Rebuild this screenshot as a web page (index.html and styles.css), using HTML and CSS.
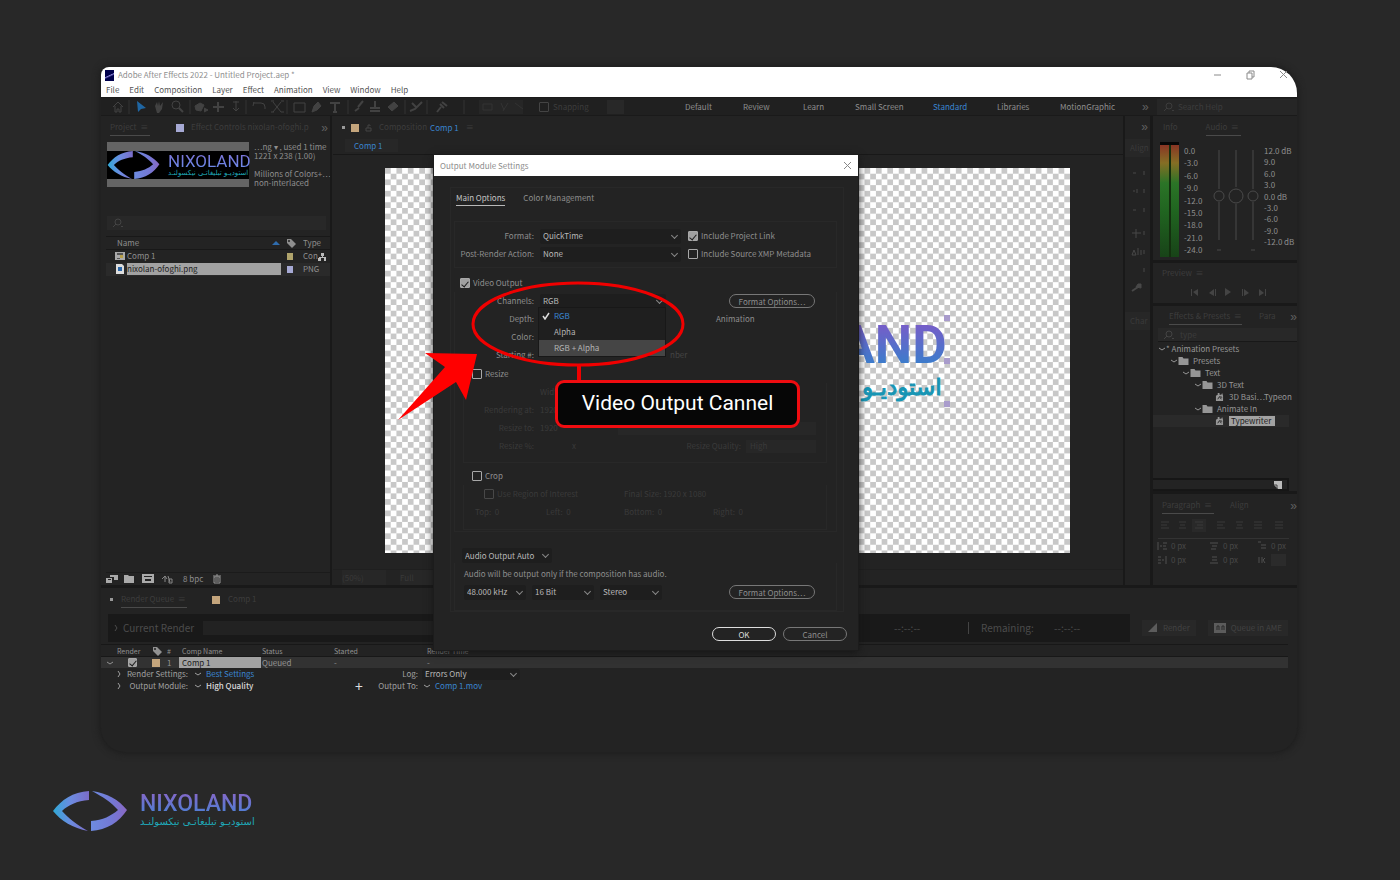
FILE: index.html
```html
<!DOCTYPE html>
<html lang="en">
<head>
<meta charset="utf-8">
<title>Output Module Settings</title>
<link rel="stylesheet" href="styles.css">
</head>
<body>
<svg class="defs" aria-hidden="true">
  <defs>
    <linearGradient id="eyeA" x1="0" y1="0" x2="1" y2="0"><stop offset="0" stop-color="#2fa9d6"/><stop offset="0.5" stop-color="#6d8be0"/><stop offset="1" stop-color="#7b6cc8"/></linearGradient>
    <linearGradient id="eyeB" x1="0" y1="0" x2="1" y2="0"><stop offset="0" stop-color="#6d8be0"/><stop offset="0.6" stop-color="#7478d4"/><stop offset="1" stop-color="#8a68c4"/></linearGradient>
    <symbol id="eye" viewBox="0 0 74 40">
      <path fill="url(#eyeA)" d="M36 0v9C24 10 15 14 9 20c6 7 14 13 26 20C20 37 8 30 0 20 8 9 20 1 36 0z"/>
      <path fill="url(#eyeB)" d="M38 40v-10c12-1 20-5 27-11C58 11 50 6 39 0c15 2 27 9 35 19-8 12-20 20-36 21z"/>
    </symbol>
    <symbol id="folder" viewBox="0 0 10 8"><path fill="currentColor" d="M0 0h4l1 1.500h5V8H0z"/></symbol>
    <symbol id="preset" viewBox="0 0 10 9"><path fill="currentColor" d="M1 9V3l2-1V0h2v2h2l1-2 1 3v6H1z"/><path stroke="#232323" fill="none" d="M3 7l2-3 2 3M6 4l2 1"/></symbol>
    <symbol id="tag" viewBox="0 0 10 10"><path fill="currentColor" d="M1 1h4l5 5-4 4-5-5z"/><circle cx="3" cy="3" r="1" fill="#232323"/></symbol>
    <symbol id="chev" viewBox="0 0 8 8"><path fill="none" stroke="currentColor" d="M1 3l3 2 3-2"/></symbol>
    <symbol id="chevr" viewBox="0 0 8 8"><path fill="none" stroke="currentColor" d="M3 1l2 3-2 3"/></symbol>
    <symbol id="lens" viewBox="0 0 12 10"><path fill="none" stroke="currentColor" d="M5 6L2 9M10 8l1 1 1-1"/><circle cx="7" cy="4" r="3" fill="none" stroke="currentColor"/></symbol>
  </defs>
</svg>

<main class="app">
  <header class="titlebar">
    <div class="titlerow">
      <span class="appicon"></span>
      <span class="apptitle">Adobe After Effects 2022 - Untitled Project.aep *</span>
      <svg class="winctl" viewBox="0 0 80 12"><path fill="none" stroke="#8a8a8a" d="M4 6h7M37 4h5v6h-5zM39 4V2h5v6h-2M70 2l7 7M77 2l-7 7"/></svg>
    </div>
    <nav class="menubar"><span>File</span><span>Edit</span><span>Composition</span><span>Layer</span><span>Effect</span><span>Animation</span><span>View</span><span>Window</span><span>Help</span></nav>
  </header>

  <div class="toolbar">
    <svg class="tools" viewBox="0 0 364 18" fill="none" stroke="#424242">
      <path d="M12 9l5-5 5 5M14 8v6h2v-3h2v3h2V8"/><path stroke="#333" d="M28 2v14M89 2v14M145 2v14M186 2v14M247 2v14M304 2v14M326 2v14M363 2v14"/>
      <path fill="#1f66a3" stroke="none" d="M36 3l9 7-5 1-3 3z"/>
      <path fill="#424242" stroke="none" d="M54 8l2-4 1 4 1-5 1 5 3-4-1 7-3 4h-2z"/>
      <circle cx="75" cy="7" r="4"/><path stroke-width="2" d="M78 10l4 4"/>
      <path fill="#424242" d="M94 8l5-3 4 2-3 6-5-1zM103 10l4 2-4 2"/>
      <path stroke-width="2" d="M112 9h11M117 4v10"/><path d="M135 3v10M132 10l3 3 3-3M132 4h6"/>
      <path d="M152 8l1-4M152 5h8a4 4 0 0 1 4 4v2M172 4l8 10M180 4l-8 10M170 3h3M180 3h3M170 14h3M180 14h3"/>
      <path d="M193 5h11v9h-11z"/>
      <path fill="#424242" d="M211 14l2-6 4-4 3 4-4 4z"/>
      <path stroke-width="2" d="M229 5h10M234 5v9M232 14h4"/>
      <path stroke-width="2" d="M262 3l-5 6M254 13l4-3M274 3v6M269 10h10M269 13h10"/>
      <path fill="#424242" d="M287 9l6-5 4 4-6 5z"/>
      <path stroke-width="2" d="M311 5l4 4M309 13l5-2 7-7M339 6l4 4M336 14l4-5M341 4l5 4"/>
    </svg>
    <svg class="tools2" viewBox="0 0 44 14" fill="none" stroke="#333"><path d="M4 4h9v6H4zM22 3l3 7M29 3l-5 8M36 3l8 6"/></svg>
    <label class="snap"><input type="checkbox" class="box"> Snapping</label>
    <span class="toolpad"></span>
    <nav class="spaces"><button>Default</button><button>Review</button><button>Learn</button><button>Small Screen</button><button class="blue">Standard</button><button>Libraries</button><button>MotionGraphic</button><button class="guil">»</button></nav>
    <label class="helpsearch"><svg class="ic12"><use href="#lens"/></svg><input type="text" placeholder="Search Help" aria-label="Search Help"></label>
  </div>

  <div class="workarea">
    <section class="project">
      <div class="tabs"><span class="tab on">Project &nbsp;≡</span><i class="sw lav"></i><span class="tab">Effect Controls nixolan-ofoghi.p</span><span class="more">»</span></div>
      <div class="asset">
        <div class="thumb"><div class="thumbin"><svg class="eyes"><use href="#eye"/></svg><div class="brand small"><b>NIXOLAND</b><span lang="fa" dir="rtl">استودیـو تبلیغاتـی نیکسولنـد</span></div></div></div>
        <p class="info">…ng ▾ , used 1 time<br>1221 x 238 (1.00)<br><br>Millions of Colors+…<br>non-interlaced</p>
      </div>
      <label class="search left"><svg class="ic12"><use href="#lens"/></svg><input type="text" aria-label="Search project"></label>
      <table class="files">
        <thead><tr><th>Name</th><th class="c-sort"><i class="tri"></i></th><th><svg class="ic10"><use href="#tag"/></svg></th><th>Type</th></tr></thead>
        <tbody>
          <tr><td colspan="2"><span class="fname"><svg class="ic10" viewBox="0 0 10 8"><path fill="#aaa" d="M0 0h10v8H0z"/><path fill="#555" d="M2 1h6v2H2zM2 6h3v1H2z"/><path fill="#b7a04a" d="M5 3h3v3H5z"/></svg><span>Comp 1</span></span></td><td><i class="sw khaki"></i></td><td>Con<svg class="ic8" viewBox="0 0 9 8"><path fill="#bbb" d="M3 0h3v3H5v1h3v4H6V5H3v3H0V5h1V4h3V3H3z"/></svg></td></tr>
          <tr class="picked"><td colspan="2"><span class="fname"><svg class="ic10" viewBox="0 0 10 10"><path fill="#ddd" d="M1 0h6l2 2v8H1z"/><path fill="#2a66a8" d="M3 3h4v4H3z"/></svg><span class="hl">nixolan-ofoghi.png</span></span></td><td><i class="sw lav"></i></td><td>PNG</td></tr>
        </tbody>
      </table>
      <div class="pfoot">
        <svg class="footicons" viewBox="0 0 68 10" fill="#aaa"><path d="M0 4h6v5H0zM4 1h8v5H8V3H4zM18 1h4l1 1h5v7H18zM36 0h12v9H36z"/><path fill="#232323" d="M38 2h8v1h-8zM39 5h6v2h-6zM2 5h3v1H2z"/><path fill="none" stroke="#888" d="M56 5l3-3 2 3M59 2v6M62 2l2 6M63 5h3v4h-3z"/></svg>
        <span>8 bpc</span>
        <svg class="ic10" viewBox="0 0 10 10"><path fill="none" stroke="#999" d="M2 3h6v6H2zM1 2h8M4 1h2M4 4v4M6 4v4"/></svg>
      </div>
    </section>

    <section class="comp">
      <div class="tabs"><i class="dot"></i><i class="sw tan"></i><svg class="ic8" viewBox="0 0 8 8"><path fill="none" stroke="#444" d="M1 4h5v3H1zM3 4V1h2v1"/></svg><span class="tab">Composition</span><b class="blue">Comp 1</b><span class="tab">≡</span></div>
      <div class="crumb"><button class="blue">Comp 1</button></div>
      <div class="stage">
        <div class="canvas">
          <svg class="checker" viewBox="0 0 960 540"><defs><pattern id="ck" width="16" height="16" patternUnits="userSpaceOnUse"><path fill="#fff" d="M0 0h16v16H0z"/><path fill="#c8c8c8" d="M0 0h8v8H0zM8 8h8v8H8z"/></pattern></defs><rect width="960" height="540" fill="url(#ck)"/></svg>
          <div class="brand big"><b>AND</b><span lang="fa" dir="rtl">استودیـو تـ</span></div>
          <div class="handles"><i></i><i></i><i></i></div>
        </div>
      </div>
      <div class="viewfoot"><span>(50%)</span><span>Full</span></div>
    </section>

    <aside class="strip">
      <span class="more">»</span><span class="chip">Align</span>
      <svg viewBox="0 0 24 150" fill="none" stroke="#484848"><path d="M8 11h3M19 9v4M8 29h2M12 27v4M19 27v4M8 48h3M19 46v4M7 71h9M11 67v9M19 69v4M7 93l2-5 2 5zM13 86v7M16 88v5M19 88v4M19 106v4"/><path stroke-width="2" d="M7 129l6-4"/><path fill="#484848" d="M11 125l2-3h3v4z"/></svg>
      <span class="chip">Char</span>
    </aside>

    <aside class="right">
      <section class="audio">
        <div class="tabs"><span class="tab">Info</span><span class="tab on wide">Audio &nbsp;≡</span></div>
        <div class="mixer">
          <div class="meter"></div>
          <div class="scale"><span>0.0</span><span>-3.0</span><span>-6.0</span><span>-9.0</span><span>-12.0</span><span>-15.0</span><span>-18.0</span><span>-21.0</span><span>-24.0</span></div>
          <svg class="faders" viewBox="0 0 52 114" fill="none" stroke="#4a4a4a"><path d="M9 8v39M9 60v38M26 8v37M26 62v36M43 8v39M43 60v38M7 108h4M41 108h4"/><circle cx="9" cy="54" r="5"/><circle cx="26" cy="54" r="7"/><circle cx="43" cy="54" r="5"/></svg>
          <div class="scale db"><span>12.0 dB</span><span>9.0</span><span>6.0</span><span>3.0</span><span>0.0 dB</span><span>-3.0</span><span>-6.0</span><span>-9.0</span><span>-12.0 dB</span></div>
        </div>
      </section>
      <section class="preview">
        <div class="ptitle">Preview &nbsp;≡</div>
        <svg class="play" viewBox="0 0 76 8" fill="#444"><path d="M1 1h1v7H1zM8 1v7L3 4zM24 1v7l-5-3zM25 1h1v7h-1zM35 0l6 4-6 4zM52 1h1v7h-1zM54 1v7l5-3zM69 1v7l5-3zM75 1h1v7h-1z"/></svg>
      </section>
      <section class="effects">
        <div class="tabs"><span class="tab on">Effects &amp; Presets &nbsp;≡</span><span class="tab">Para</span><span class="more">»</span></div>
        <label class="search"><svg class="ic12"><use href="#lens"/></svg><input type="text" placeholder="type" aria-label="Search effects"></label>
        <ul class="tree">
          <li class="l0"><svg class="ic8"><use href="#chev"/></svg>* Animation Presets</li>
          <li class="l1"><svg class="ic8"><use href="#chev"/></svg><svg class="fold"><use href="#folder"/></svg>Presets</li>
          <li class="l2"><svg class="ic8"><use href="#chev"/></svg><svg class="fold"><use href="#folder"/></svg>Text</li>
          <li class="l3"><svg class="ic8"><use href="#chev"/></svg><svg class="fold"><use href="#folder"/></svg>3D Text</li>
          <li class="l4"><svg class="fold"><use href="#preset"/></svg>3D Basi…Typeon</li>
          <li class="l3"><svg class="ic8"><use href="#chev"/></svg><svg class="fold"><use href="#folder"/></svg>Animate In</li>
          <li class="l4 chosen"><svg class="fold"><use href="#preset"/></svg><span class="hl">Typewriter</span></li>
        </ul>
        <div class="efoot"><svg class="ic10" viewBox="0 0 10 10"><path fill="#bbb" d="M1 1h8v8H5L1 5z"/><path stroke="#444" fill="none" d="M1 5h3v4"/></svg></div>
      </section>
      <section class="para">
        <div class="tabs"><span class="tab on">Paragraph &nbsp;≡</span><span class="tab">Align</span><span class="more">»</span></div>
        <div class="aligns">
          <svg viewBox="0 0 130 18" fill="none" stroke="#3b3b3b"><path fill="#292929" stroke="none" d="M34 2h14v13H34z"/><path d="M3 5h8M3 8h6M3 11h8M21 5h7M22 8h5M21 11h7M37 5h8M39 8h6M37 11h8M59 5h8M59 8h6M59 11h8M78 5h7M79 8h5M78 11h7M96 5h8M96 8h8M96 11h8M117 5h8M117 8h8M117 11h8"/></svg>
        </div>
        <div class="indents">
          <span><svg class="ic10" viewBox="0 0 10 10"><path fill="none" stroke="#505050" d="M1 1v8M3 5h2M6 2h4M6 5h3M6 8h4"/></svg>0 px</span><span><svg class="ic10" viewBox="0 0 10 10"><path fill="none" stroke="#505050" d="M1 2h8M3 5h5M2 8h5"/></svg>0 px</span><span><svg class="ic10" viewBox="0 0 10 10"><path fill="none" stroke="#505050" d="M1 1h3M4 4h5M4 7h5"/></svg>0 px</span>
          <span><svg class="ic10" viewBox="0 0 10 10"><path fill="none" stroke="#505050" d="M9 1v8M5 5h2M1 2h3M1 5h3M1 8h3"/></svg>0 px</span><span><svg class="ic10" viewBox="0 0 10 10"><path fill="none" stroke="#505050" d="M3 2h5M3 5h5M1 8h8"/></svg>0 px</span><span><svg class="ic10" viewBox="0 0 10 10"><path fill="none" stroke="#505050" d="M2 2v6M5 2v6M8 3l-2 2 2 3"/></svg><i class="pad"></i></span>
        </div>
      </section>
    </aside>
  </div>

  <section class="queue">
    <div class="tabs"><i class="dot"></i><span class="tab on">Render Queue &nbsp;≡</span><i class="sw tan"></i><span class="tab">Comp 1</span></div>
    <div class="current">
      <div class="curbar"><span class="curname"><svg class="ic8"><use href="#chevr"/></svg>Current Render</span><span class="progress"></span><span class="elapsed">--:--:--</span><span class="rem">Remaining:</span><span class="left2">--:--:--</span></div>
      <button class="qbtn" disabled><svg class="ic10" viewBox="0 0 10 10"><path fill="#5c5c5c" d="M9 0v9H0z"/></svg>Render</button>
      <button class="qbtn" disabled><svg class="ic12" viewBox="0 0 12 10"><path fill="#5c5c5c" d="M0 0h12v10H0z"/><path stroke="#2a2a2a" fill="none" d="M3 7V3h2v4M8 7V3h2v4"/></svg>Queue in AME</button>
    </div>
    <div class="qhead qgrid"><span></span><span>Render</span><span><svg class="ic10"><use href="#tag"/></svg></span><span>#</span><span class="nm">Comp Name</span><span>Status</span><span>Started</span><span>Render Time</span></div>
    <div class="qrow qgrid"><svg class="ic8"><use href="#chev"/></svg><span class="ctr"><input type="checkbox" class="box" checked aria-label="Render Comp 1"></span><span><i class="sw tan"></i></span><span>1</span><span class="hl nm">Comp 1</span><span>Queued</span><span>-</span><span>-</span></div>
    <div class="qset"><svg class="ic8"><use href="#chevr"/></svg><span class="ql">Render Settings:</span><svg class="ic8"><use href="#chev"/></svg><a class="blue qv" href="#">Best Settings</a><span></span><span class="ql">Log:</span><span class="sel"><select aria-label="Log"><option>Errors Only</option></select></span></div>
    <div class="qset"><svg class="ic8"><use href="#chevr"/></svg><span class="ql">Output Module:</span><svg class="ic8"><use href="#chev"/></svg><b class="qv">High Quality</b><span class="plus">+</span><span class="ql">Output To:</span><span class="out"><svg class="ic8"><use href="#chev"/></svg><a class="blue" href="#">Comp 1.mov</a></span></div>
  </section>

  <div class="dialog" role="dialog" aria-label="Output Module Settings">
    <div class="dtitle"><span>Output Module Settings</span><svg class="dclose" viewBox="0 0 9 9"><path stroke="#888" d="M1 1l7 7M8 1l-7 7"/></svg></div>
    <div class="dbody">
      <div class="frame">
        <div class="dtabs"><button class="on">Main Options</button><button>Color Management</button></div>
        <div class="group g1">
          <div class="row"><label class="lab" for="fmt">Format:</label><span class="sel w141"><select id="fmt"><option>QuickTime</option></select></span><label class="chk"><input type="checkbox" class="box" checked>Include Project Link</label></div>
          <div class="row"><label class="lab" for="pra">Post-Render Action:</label><span class="sel w141"><select id="pra"><option>None</option></select></span><label class="chk"><input type="checkbox" class="box">Include Source XMP Metadata</label></div>
        </div>
        <div class="vhead"><label class="chk"><input type="checkbox" class="box" checked>Video Output</label></div>
        <div class="group g2">
          <div class="row"><label class="lab" for="chn">Channels:</label><span class="sel w126"><select id="chn"><option>RGB</option><option>Alpha</option><option>RGB + Alpha</option></select></span><button class="pill fo">Format Options…</button></div>
          <div class="row"><span class="lab">Depth:</span><span class="anim">Animation</span></div>
          <div class="row"><span class="lab">Color:</span></div>
          <div class="row"><span class="lab">Starting #:</span><span class="mber">nber</span></div>
          <label class="chk ghead"><input type="checkbox" class="box">Resize</label>
          <div class="inner rs">
            <div class="row"><span class="lab"></span><span>Width</span></div>
            <div class="row"><span class="lab">Rendering at:</span><span>1920</span></div>
            <div class="row"><span class="lab">Resize to:</span><span class="num">1920</span><span class="field w198"></span></div>
            <div class="row"><span class="lab">Resize %:</span><span class="num pc">x</span><span class="rq">Resize Quality:</span><span class="field w70">High</span></div>
          </div>
          <label class="chk ghead crop"><input type="checkbox" class="box">Crop</label>
          <div class="inner cr">
            <div class="row crow"><label class="chk"><input type="checkbox" class="box" disabled>Use Region of Interest</label><span>Final Size: 1920 x 1080</span></div>
            <div class="row four"><span>Top: &nbsp;0</span><span>Left: &nbsp;0</span><span>Bottom: &nbsp;0</span><span>Right: &nbsp;0</span></div>
          </div>
        </div>
        <div class="audiohead"><span class="sel w90"><select aria-label="Audio output"><option>Audio Output Auto</option></select></span></div>
        <div class="group g3">
          <p>Audio will be output only if the composition has audio.</p>
          <div class="row"><span class="sel w62"><select aria-label="Sample rate"><option>48.000 kHz</option></select></span><span class="sel w62"><select aria-label="Bit depth"><option>16 Bit</option></select></span><span class="sel w62"><select aria-label="Audio channels"><option>Stereo</option></select></span><button class="pill fo">Format Options…</button></div>
        </div>
      </div>
      <div class="actions"><button class="pill ok">OK</button><button class="pill">Cancel</button></div>
    </div>
    <ul class="popup" role="listbox" aria-label="Channels"><li class="blue" role="option"><svg class="ic8" viewBox="0 0 8 8"><path fill="none" stroke="#ddd" stroke-width="1.500" d="M1 4l2 3 4-6"/></svg>RGB</li><li role="option">Alpha</li><li class="hot" role="option">RGB + Alpha</li></ul>
    <svg class="marks" viewBox="0 0 300 150"><ellipse cx="183" cy="47" rx="105" ry="41" fill="none" stroke="#f00000" stroke-width="3"/><path stroke="#f00000" stroke-width="4" d="M184 88v16"/><path fill="#ff0000" d="M30 76l52 1-11 46-10-18-58 38 47-53z"/></svg>
    <div class="callout">Video Output Cannel</div>
  </div>
</main>

<footer class="logo"><svg class="eyes"><use href="#eye"/></svg><div class="brand mid"><b>NIXOLAND</b><span lang="fa" dir="rtl">استودیـو تبلیغاتـی نیکسولنـد</span></div></footer>
</body>
</html>
```
FILE: styles.css
```css
* { box-sizing: border-box; }
body { margin: 0; background: #282828; color: #8e8e8e; font: 8px/12px "Noto Sans CJK SC", "Noto Sans", sans-serif; }
button, input, select { font: inherit; color: inherit; background: none; border: 0; padding: 0; margin: 0; text-align: left; min-width: 0; }
a { text-decoration: none; }
p, ul { margin: 0; padding: 0; list-style: none; }
svg { display: block; flex: none; }
.defs { position: absolute; width: 0; height: 0; }
.blue { color: #3a85d0; }
.ic8 { width: 8px; height: 8px; }
.ic10 { width: 10px; height: 10px; }
.ic12 { width: 12px; height: 10px; }
.hl { background: #a2a2a2; color: #1c1c1c; }
.box { appearance: none; width: 10px; height: 10px; border: 1px solid #a8a8a8; border-radius: 1px; flex: none; display: grid; place-items: center; }
.box:checked { background: #a0a0a0; }
.box:checked::after { content: ""; width: 3px; height: 6px; border: solid #1c1c1c; border-width: 0 1px 1px 0; transform: rotate(40deg); }
.box:disabled { border-color: #484848; }

.app { position: relative; margin: 67px 103px 0 101px; background: #232323; border-radius: 8px 26px 24px 24px; box-shadow: 0 0 6px 2px #1e1e1e; }

.titlebar { height: 31px; background: #fff; border-radius: 8px 26px 0 0; border-bottom: 1px solid #1b1b1b; color: #555; }
.titlerow { display: flex; align-items: center; height: 16px; padding: 0 7px 0 4px; gap: 4px; color: #8f8f8f; }
.appicon { width: 9px; height: 11px; background: linear-gradient(155deg, #00004c 45%, #8a82d8 50%, #00004c 62%); }
.apptitle { flex: 1; }
.winctl { width: 80px; height: 12px; }
.menubar { display: flex; gap: 10px; padding-left: 5px; line-height: 14px; }

.toolbar { display: flex; align-items: center; height: 18px; background: #202020; border-bottom: 1px solid #1a1a1a; }
.tools { width: 364px; height: 18px; }
.tools2 { width: 44px; height: 14px; margin: 0 10px 0 14px; background: #262626; }
.snap { display: flex; align-items: center; gap: 4px; color: #3c3c3c; margin-left: 6px; width: 68px; }
.snap .box { border-color: #444; }
.toolpad { width: 17px; height: 14px; background: #282828; }
.spaces { flex: 1; display: grid; grid-template-columns: 58px 60px 52px 78px 64px 63px 82px 14px; padding-left: 61px; }
.spaces button { white-space: nowrap; }
.spaces .guil { font: 12px/12px "Liberation Sans", sans-serif; color: #606060; }
.helpsearch { display: flex; gap: 4px; align-items: center; width: 140px; height: 16px; padding-left: 5px; background: #262626; color: #3c3c3c; }
::placeholder { color: #3c3c3c; opacity: 1; }

.workarea { display: grid; grid-template-columns: 231px minmax(0, 1fr) 28px 144px; border-bottom: 3px solid #191919; }
.workarea > * { min-width: 0; }
.tabs { display: flex; align-items: center; height: 23px; color: #3d3d3d; white-space: nowrap; }
.tab { height: 16px; line-height: 14px; }
.tab.on { border-bottom: 1px solid #4a4a4a; }
.more { margin-left: auto; font: 12px/12px "Liberation Sans", sans-serif; color: #606060; }
.sw { display: block; width: 8px; height: 8px; }
.lav { background: #a6a9d4; }
.tan { background: #c4a57c; }
.khaki { background: #b0a46c; }
.dot { width: 3px; height: 3px; background: #999; }

.project { display: flex; flex-direction: column; padding-left: 5px; border-right: 2px solid #191919; }
.project .tabs { padding: 0 2px 0 4px; }
.project .tab.on { width: 40px; margin-right: 26px; }
.project .sw.lav + .tab { margin-left: 7px; }
.asset { display: flex; gap: 5px; padding: 3px 0 0 1px; height: 74px; }
.thumb { width: 142px; height: 45px; padding: 9px 0 8px; background: #646464; }
.thumbin { display: flex; align-items: center; gap: 8px; height: 28px; background: #000; }
.thumbin .eyes { width: 53px; height: 28px; }
.info { line-height: 9px; white-space: nowrap; overflow: hidden; }
.search { display: flex; align-items: center; gap: 6px; height: 14px; background: #282828; color: #444; padding-left: 4px; }
.search input { flex: 1; }
.search.left { margin: 3px 4px 6px 1px; }
.files { width: 100%; border-collapse: collapse; table-layout: fixed; }
.files th, .files td { padding: 0; font-weight: 400; text-align: left; white-space: nowrap; overflow: hidden; vertical-align: middle; }
.files th:nth-child(1) { width: 165px; padding-left: 11px; }
.files th:nth-child(2) { width: 15px; }
.files th:nth-child(3) { width: 17px; }
.files thead tr { height: 13px; border-top: 1px solid #181818; border-bottom: 1px solid #181818; }
.files tbody tr { height: 13px; line-height: 12px; }
.files td .sw { width: 6px; height: 7px; margin-left: 1px; }
.files td > .ic8 { display: inline-block; vertical-align: middle; width: 9px; }
.tri { display: block; width: 8px; height: 4px; background: #2f6cae; clip-path: polygon(50% 0, 100% 100%, 0 100%); margin-left: 1px; }
.fname { display: flex; align-items: center; gap: 2px; padding-left: 9px; margin-right: 5px; }
.fname .hl { flex: 1; }
.picked { background: #2a2a2a; }
.pfoot { margin-top: auto; display: flex; align-items: center; gap: 9px; height: 13px; border-top: 1px solid #1b1b1b; }
.footicons { width: 68px; height: 10px; }

.comp { display: flex; flex-direction: column; padding-left: 1px; border-right: 2px solid #191919; }
.comp .tabs { padding-left: 9px; gap: 6px; }
.comp .tabs b { font-weight: 400; margin: 0 1px 0 -3px; }
.crumb { height: 16px; padding-left: 12px; border-bottom: 1px solid #181818; }
.crumb button { width: 53px; height: 13px; padding-left: 9px; background: #272727; }
.stage { padding: 13px 53px 16px 52px; }
.canvas { position: relative; overflow: hidden; aspect-ratio: 16 / 9; }
.checker { width: 100%; height: 100%; }
.viewfoot { display: flex; gap: 14px; height: 16px; line-height: 15px; padding-left: 9px; border-top: 1px solid #1f1f1f; color: #393939; }
.viewfoot span { width: 44px; background: #272727; }

.brand { display: flex; flex-direction: column; font-family: Roboto, sans-serif; white-space: nowrap; }
.brand b { font-weight: 500; color: transparent; background: linear-gradient(#8468c8, #4a80d4); background-clip: text; }
.brand span { font-family: "DejaVu Sans", sans-serif; color: #1fa9b8; text-align: left; }
.brand.small b { font-size: 17px; line-height: 16px; font-weight: 400; background-image: linear-gradient(#7d72d6, #6a8bea); }
.brand.small span { font-size: 7px; line-height: 9px; }
.brand.mid b { font-size: 23px; line-height: 22px; }
.brand.mid span { font-size: 10px; line-height: 14px; }
.brand.big { position: absolute; right: 18%; top: 150px; align-items: flex-end; }
.brand.big b { font-size: 53px; line-height: 54px; font-weight: 700; background-image: linear-gradient(#8058c8, #2f83cc); }
.brand.big span { font-size: 23px; line-height: 30px; margin-right: 5px; color: #1795b4; -webkit-text-stroke: 1px #1795b4; }
.handles { position: absolute; right: 18%; top: 147px; display: flex; flex-direction: column; justify-content: space-between; height: 92px; margin-right: -3px; }
.handles i { width: 6px; height: 6px; background: #a99ccc; }

.strip { display: flex; flex-direction: column; border-right: 3px solid #191919; }
.strip .more { height: 23px; line-height: 22px; padding-right: 2px; }
.chip { height: 18px; line-height: 18px; background: #272727; color: #3a3a3a; padding-left: 5px; }
.strip svg { width: 24px; height: 150px; margin-top: 5px; }

.right { display: flex; flex-direction: column; }
.right .tabs { padding: 0 0 0 10px; }
.audio { height: 147px; border-bottom: 3px solid #191919; }
.audio .tab.wide { width: 35px; margin-left: 28px; }
.mixer { display: flex; padding: 3px 0 0 7px; }
.meter { width: 19px; height: 115px; border-top: 3px solid #080808; background: linear-gradient(90deg, transparent 9px, #14300f 9px 11px, transparent 11px), linear-gradient(#8a3524, #856e24 16%, #2b7427 34%, #206420 60%, #184318); }
.scale { display: flex; flex-direction: column; justify-content: space-between; width: 31px; height: 112px; padding: 4px 0 0 5px; line-height: 9px; white-space: nowrap; }
.faders { width: 52px; height: 114px; }
.scale.db { height: 104px; width: 34px; padding: 4px 0 0 2px; }
.preview { height: 43px; border-bottom: 3px solid #191919; color: #3d3d3d; padding: 4px 0 0 9px; }
.play { width: 76px; height: 8px; margin: 9px 0 0 28px; }
.effects { display: flex; flex-direction: column; height: 188px; border-bottom: 3px solid #191919; }
.effects .tabs { padding-left: 16px; height: 22px; }
.effects .tab.on { width: 73px; margin-right: 17px; }
.effects .search { margin-left: 5px; border-bottom: 1px solid #181818; }
.tree { flex: 1; padding-top: 1px; color: #969696; white-space: nowrap; }
.tree li { display: flex; align-items: center; gap: 4px; height: 12px; margin-right: 8px; }
.l0 { padding-left: 5px; } .l1 { padding-left: 17px; } .l2 { padding-left: 29px; } .l3 { padding-left: 41px; } .l4 { padding-left: 61px; }
.tree .l0 { gap: 0; }
.tree li .ic8 { margin-right: -4px; }
.tree .l0 .ic8 { margin-right: 0; }
.fold { width: 11px; height: 8px; }
.tree .chosen { background: #2a2a2a; }
.tree .hl { width: 46px; line-height: 10px; padding-left: 2px; }
.efoot { height: 13px; border: 2px solid #161616; border-left: 0; margin-right: 8px; display: flex; justify-content: flex-end; padding-right: 4px; }
.para .tabs { padding-left: 9px; }
.para .tab.on { width: 52px; margin-right: 16px; }
.aligns { margin: 0 8px 0 5px; height: 22px; border-bottom: 1px solid #333; }
.aligns svg { width: 130px; height: 18px; }
.indents { display: grid; grid-template-columns: 52px 48px 40px; row-gap: 3px; margin: 2px 0 19px 4px; color: #484848; line-height: 10px; }
.indents span { display: flex; align-items: center; gap: 4px; white-space: nowrap; }
.pad { width: 15px; height: 12px; background: #2b2b2b; }

.queue { height: 164px; color: #929292; padding-right: 9px; }
.queue .tabs { gap: 8px; padding-left: 9px; }
.queue .tab.on { width: 66px; margin-right: 17px; }
.current { display: flex; align-items: center; gap: 12px; margin: 3px 0 2px 7px; font-size: 10px; color: #4c4c4c; }
.curbar { flex: 1; display: grid; grid-template-columns: 95px minmax(0, 1fr) 74px 86px 76px; align-items: center; height: 28px; background: #191919; }
.curname { display: flex; align-items: center; gap: 3px; padding-left: 4px; white-space: nowrap; }
.progress { height: 14px; background: #222; margin-right: 350px; }
.rem { border-left: 1px solid #444; padding-left: 12px; }
.qbtn { display: flex; align-items: center; gap: 5px; height: 16px; padding: 0 6px; background: #282828; font-size: 8px; color: #424242; }
.qgrid { display: grid; grid-template-columns: 8px 38px 15px 12px 83px 72px 93px minmax(0, 1fr); align-items: center; padding-left: 5px; }
.qhead { height: 13px; border-top: 1px solid #181818; border-bottom: 1px solid #181818; font-size: 7px; }
.qhead span:nth-child(2) { padding-left: 3px; }
.qrow { height: 11px; background: #323232; line-height: 11px; }
.qgrid .nm { padding-left: 3px; margin-right: 1px; }
.ctr { padding-left: 14px; }
.ctr .box { width: 9px; height: 9px; }
.qset { display: grid; grid-template-columns: 10px 63px 18px 149px 14px 49px 96px; align-items: center; height: 12px; line-height: 12px; padding-left: 14px; color: #a0a0a0; }
.qset .ql { text-align: right; white-space: nowrap; }
.qset > .ic8:nth-child(3) { margin-left: 6px; }
.qset b { font-weight: 500; color: #d8d8d8; }
.qset .plus { font-size: 14px; color: #ddd; }
.qset .sel { margin-left: 4px; width: 98px; height: 11px; }
.out { display: flex; align-items: center; gap: 4px; padding-left: 5px; }

.sel { display: flex; align-items: center; height: 15px; background: #1e1e1e; color: #b8b8b8; border-radius: 2px; }
.sel select { appearance: none; flex: 1; padding-left: 3px; line-height: 12px; }
.sel::after { content: ""; width: 4px; height: 4px; margin: -2px 4px 0 0; border: solid #888; border-width: 0 1px 1px 0; transform: rotate(45deg); flex: none; }
.w141 { width: 141px; } .w126 { width: 126px; } .w90 { width: 90px; } .w62 { width: 62px; }

.dialog { position: absolute; left: 333px; top: 88px; width: 424px; background: #232323; box-shadow: 0 0 0 1px #1c1c1c, 0 2px 8px #141414; }
.dtitle { display: flex; justify-content: space-between; align-items: center; height: 21px; padding: 0 6px; background: #fff; color: #8c8c8c; }
.dclose { width: 9px; height: 9px; }
.dbody { padding: 11px 14px 9px 16px; }
.frame { border: 1px solid #282828; padding: 0 6px 0 3px; }
.dtabs { display: flex; gap: 18px; padding: 1px 2px 0; }
.dtabs button { height: 17px; line-height: 15px; }
.dtabs .on { color: #c4c4c4; border-bottom: 1px solid #b8b8b8; }
.group { border: 1px solid #282828; }
.g1 { margin-top: 15px; padding: 5px 0 4px; }
.row { display: flex; align-items: center; height: 18px; white-space: nowrap; }
.lab { width: 79px; margin-right: 6px; text-align: right; }
.chk { display: flex; align-items: center; gap: 3px; white-space: nowrap; }
.g1 .chk { margin-left: 7px; }
.vhead { height: 18px; margin-top: 6px; padding: 3px 6px 0; }
.g2 { padding: 0 9px 1px 0; border-top: 0; }
.fo { margin-left: auto; }
.g2 > .row .fo { margin-right: 12px; }
.anim { margin-left: 176px; }
.mber { margin-left: 130px; color: #444; }
.pill { height: 14px; width: 86px; border: 1px solid #777; border-radius: 7px; text-align: center; line-height: 11px; }
.ghead { height: 19px; margin-left: 17px; }
.inner { border: 1px solid #282828; border-top: 0; margin-left: 8px; color: #3a3a3a; }
.rs { height: 80px; }
.rs .lab { width: 70px; }
.num { width: 32px; }
.num.pc { padding-left: 32px; width: 116px; }
.field { height: 13px; background: #272727; padding-left: 4px; margin-left: auto; margin-right: 10px; }
.w198 { width: 198px; } .w70 { width: 70px; }
.rq { margin-left: auto; }
.rq + .field { margin-left: 5px; }
.crop { margin-top: 3px; }
.cr { height: 45px; }
.crow { padding-left: 20px; }
.crow .chk { width: 140px; }
.four { display: grid; grid-template-columns: 71px 78px 89px 60px; padding-left: 11px; }
.audiohead { margin: 16px 0 0 8px; height: 15px; }
.g3 { border-top: 0; padding: 2px 21px 9px 9px; }
.g3 p { height: 18px; line-height: 18px; }
.g3 .row { gap: 6px; }
.actions { display: flex; justify-content: flex-end; gap: 7px; padding-top: 15px; margin-right: -3px; }
.actions .pill { width: 64px; }
.pill.ok { border: 1px solid #ddd; color: #ddd; }
.popup { position: absolute; left: 104px; top: 152px; width: 128px; background: #1f1f1f; border: 1px solid #181818; color: #b4b4b4; }
.popup li { height: 16px; line-height: 16px; padding-left: 15px; }
.popup .blue { display: flex; align-items: center; gap: 4px; padding-left: 3px; color: #3a85d0; }
.popup .hot { background: #454545; }
.marks { position: absolute; left: -39px; top: 122px; width: 300px; height: 150px; }
.callout { position: absolute; left: 121px; top: 225px; width: 245px; height: 48px; border: 3px solid #f00c10; border-radius: 9px; background: #060606; color: #fff; font: 400 21px/41px Roboto, sans-serif; text-align: center; }

.logo { display: flex; align-items: center; gap: 13px; margin: 39px 0 0 53px; }
.logo .eyes { width: 74px; height: 40px; }
```
